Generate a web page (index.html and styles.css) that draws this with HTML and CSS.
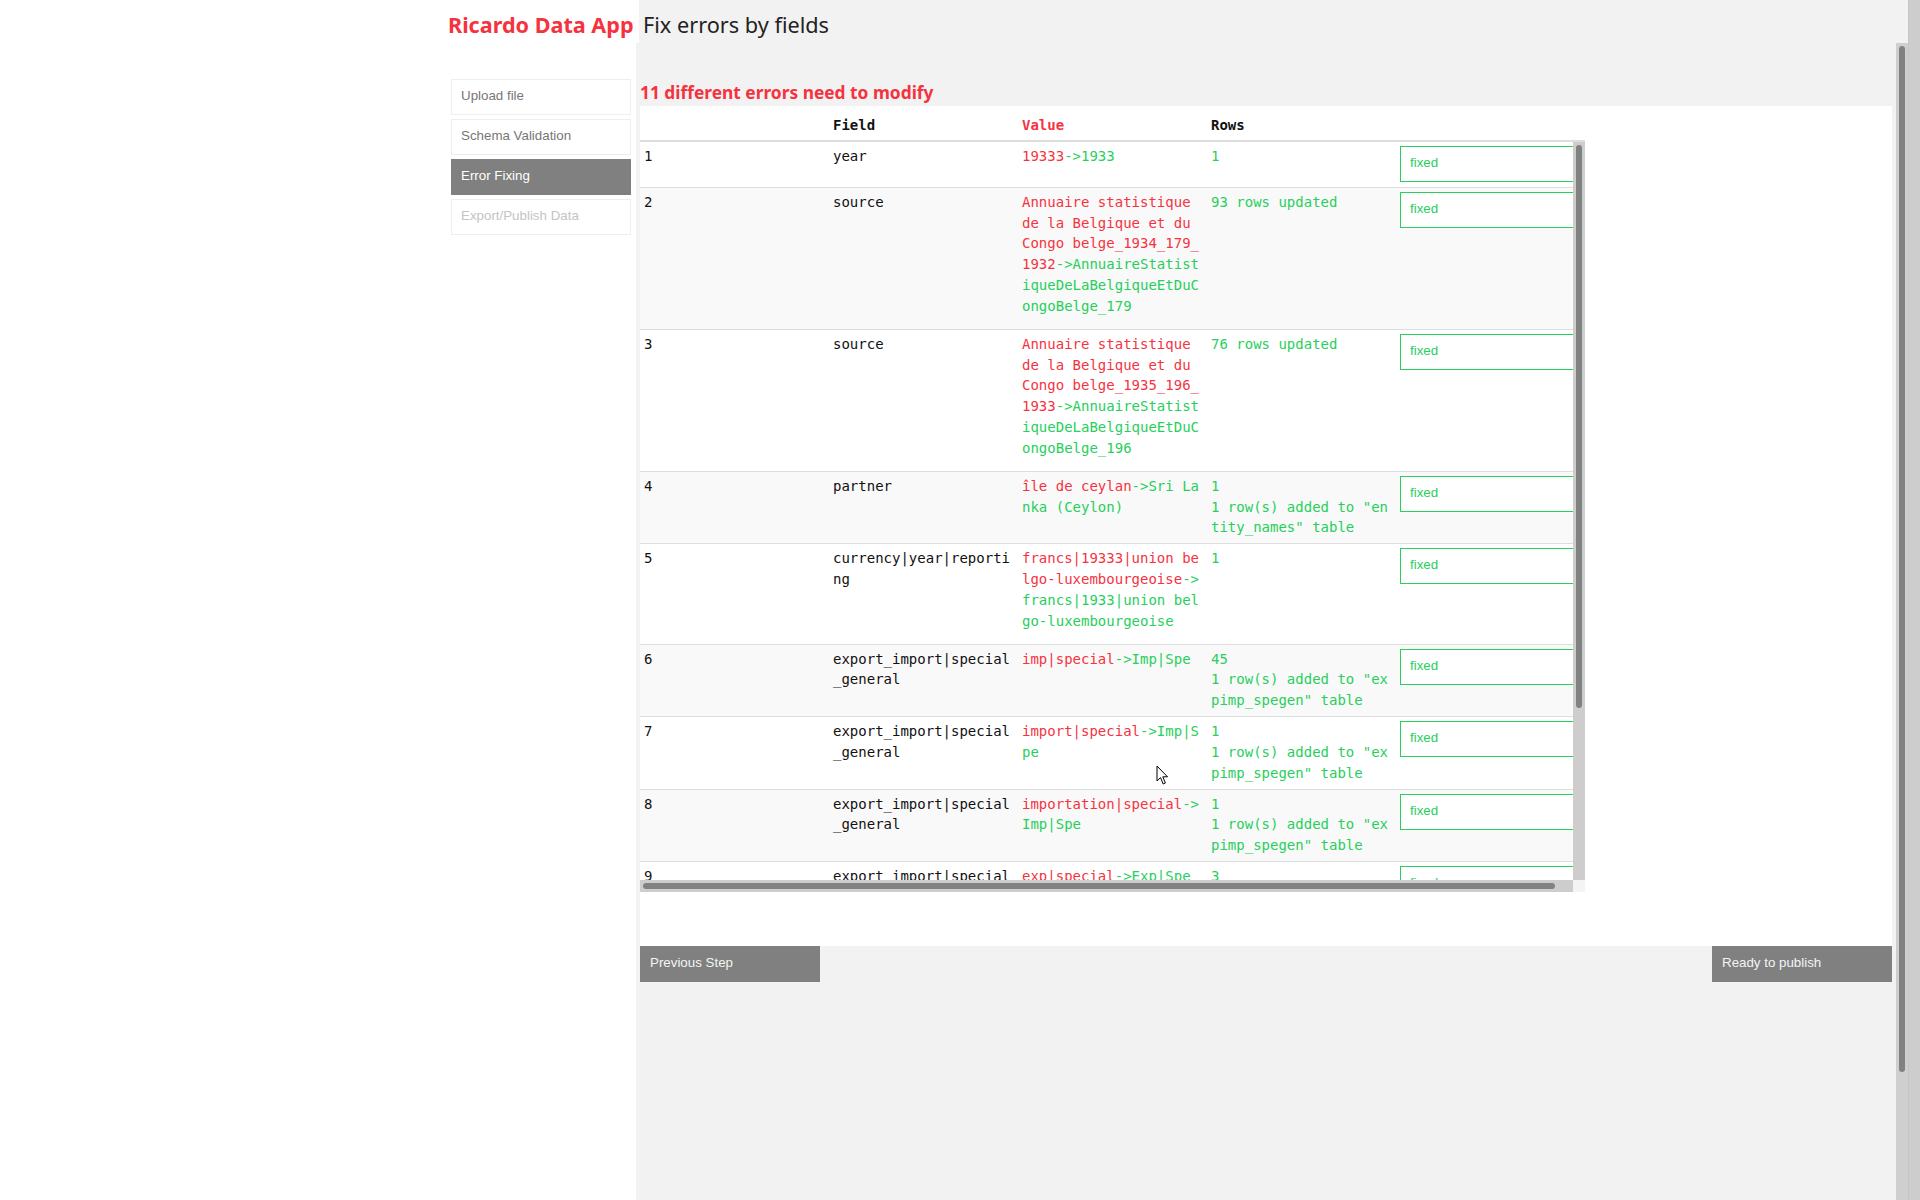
FILE: index.html
```html
<!DOCTYPE html>
<html lang="en">
<head>
<meta charset="utf-8">
<title>Ricardo Data App - Fix errors by fields</title>
<link rel="stylesheet" href="styles.css">
</head>
<body>
<div class="app">
  <div class="page">
    <header class="topbar">
      <div class="brand">Ricardo Data App</div>
      <h1 class="page-title">Fix errors by fields</h1>
    </header>
    <div class="body-row">
      <aside class="sidebar">
        <div class="step">Upload file</div>
        <div class="step">Schema Validation</div>
        <div class="step active">Error Fixing</div>
        <div class="step disabled">Export/Publish Data</div>
      </aside>
      <div class="main-scroll">
        <main class="content">
          <h2 class="errors-title">11 different errors need to modify</h2>
          <section class="panel">
            <table class="grid head-table">
              <thead>
                <tr><th></th><th>Field</th><th class="red">Value</th><th>Rows</th><th></th></tr>
              </thead>
            </table>
            <div class="tablebox">
              <div class="tb-main">
                <div class="viewport">
                  <table class="grid body-table">
                    <tbody>
                      <tr>
                        <td>1</td><td>year</td>
                        <td><div class="val"><span class="red">19333</span><span class="green">-&gt;1933</span></div></td>
                        <td class="green"><div>1</div></td>
                        <td><input class="fix" value="fixed" readonly></td>
                      </tr>
                      <tr>
                        <td>2</td><td>source</td>
                        <td><div class="val"><span class="red">Annuaire statistique de la Belgique et du Congo belge_1934_179_1932</span><span class="green">-&gt;AnnuaireStatistiqueDeLaBelgiqueEtDuCongoBelge_179</span></div></td>
                        <td class="green"><div>93 rows updated</div></td>
                        <td><input class="fix" value="fixed" readonly></td>
                      </tr>
                      <tr>
                        <td>3</td><td>source</td>
                        <td><div class="val"><span class="red">Annuaire statistique de la Belgique et du Congo belge_1935_196_1933</span><span class="green">-&gt;AnnuaireStatistiqueDeLaBelgiqueEtDuCongoBelge_196</span></div></td>
                        <td class="green"><div>76 rows updated</div></td>
                        <td><input class="fix" value="fixed" readonly></td>
                      </tr>
                      <tr>
                        <td>4</td><td>partner</td>
                        <td><div class="val"><span class="red">île de ceylan</span><span class="green">-&gt;Sri Lanka (Ceylon)</span></div></td>
                        <td class="green"><div>1</div><div>1 row(s) added to "entity_names" table</div></td>
                        <td><input class="fix" value="fixed" readonly></td>
                      </tr>
                      <tr>
                        <td>5</td><td>currency|year|reporting</td>
                        <td><div class="val"><span class="red">francs|19333|union belgo-luxembourgeoise</span><span class="green">-&gt;francs|1933|union belgo-luxembourgeoise</span></div></td>
                        <td class="green"><div>1</div></td>
                        <td><input class="fix" value="fixed" readonly></td>
                      </tr>
                      <tr>
                        <td>6</td><td>export_import|special_general</td>
                        <td><div class="val"><span class="red">imp|special</span><span class="green">-&gt;Imp|Spe</span></div></td>
                        <td class="green"><div>45</div><div>1 row(s) added to "expimp_spegen" table</div></td>
                        <td><input class="fix" value="fixed" readonly></td>
                      </tr>
                      <tr>
                        <td>7</td><td>export_import|special_general</td>
                        <td><div class="val"><span class="red">import|special</span><span class="green">-&gt;Imp|Spe</span></div></td>
                        <td class="green"><div>1</div><div>1 row(s) added to "expimp_spegen" table</div></td>
                        <td><input class="fix" value="fixed" readonly></td>
                      </tr>
                      <tr>
                        <td>8</td><td>export_import|special_general</td>
                        <td><div class="val"><span class="red">importation|special</span><span class="green">-&gt;Imp|Spe</span></div></td>
                        <td class="green"><div>1</div><div>1 row(s) added to "expimp_spegen" table</div></td>
                        <td><input class="fix" value="fixed" readonly></td>
                      </tr>
                      <tr>
                        <td>9</td><td>export_import|special_general</td>
                        <td><div class="val"><span class="red">exp|special</span><span class="green">-&gt;Exp|Spe</span></div></td>
                        <td class="green"><div>3</div><div>1 row(s) added to "expimp_spegen" table</div></td>
                        <td><input class="fix" value="fixed" readonly></td>
                      </tr>
                      <tr>
                        <td>10</td><td>export_import|special_general</td>
                        <td><div class="val"><span class="red">export|special</span><span class="green">-&gt;Exp|Spe</span></div></td>
                        <td class="green"><div>2</div><div>1 row(s) added to "expimp_spegen" table</div></td>
                        <td><input class="fix" value="fixed" readonly></td>
                      </tr>
                      <tr>
                        <td>11</td><td>export_import|special_general</td>
                        <td><div class="val"><span class="red">exportation|special</span><span class="green">-&gt;Exp|Spe</span></div></td>
                        <td class="green"><div>1</div><div>1 row(s) added to "expimp_spegen" table</div></td>
                        <td><input class="fix" value="fixed" readonly></td>
                      </tr>
                    </tbody>
                  </table>
                </div>
                <div class="vtrack"><div class="vthumb"></div></div>
              </div>
              <div class="tb-hbar">
                <div class="htrack"><div class="hthumb"></div></div>
                <div class="corner"></div>
              </div>
            </div>
          </section>
          <div class="actions">
            <button class="btn">Previous Step</button>
            <button class="btn">Ready to publish</button>
          </div>
        </main>
        <div class="page-vtrack"><div class="page-vthumb"></div></div>
      </div>
    </div>
  </div>
  <div class="outer-track"></div>
  <svg class="cursor" width="14" height="21" viewBox="0 0 14 21" aria-hidden="true">
    <path d="M1 1 L1 16 L4.5 12.6 L7.2 19 L9.4 18 L6.8 11.8 L11.5 11.8 Z" fill="#fff" stroke="#000" stroke-width="1" stroke-linejoin="round"/>
  </svg>
</div>
</body>
</html>
```

FILE: styles.css
```css
html, body {
  margin: 0;
  padding: 0;
}
body {
  overflow: hidden;
  font-family: "Liberation Sans", Arial, sans-serif;
  background: #ffffff;
}
.app {
  position: relative;
  display: flex;
  width: 1920px;
  height: 1200px;
}
.page {
  flex: 1;
  min-width: 0;
  display: flex;
  flex-direction: column;
}
.topbar {
  display: flex;
  height: 43px;
  flex-shrink: 0;
  background: #f2f2f2;
}
.brand {
  width: 639px;
  box-sizing: border-box;
  padding: 11px 0 0 448px;
  background: #ffffff;
  color: #f5333f;
  font-family: "Noto Sans", "Open Sans", sans-serif;
  font-weight: 700;
  font-size: 21.6px;
  line-height: 27px;
  white-space: nowrap;
}
.page-title {
  margin: 0;
  padding: 11px 0 0 4px;
  color: #222222;
  font-family: "Noto Sans", "Open Sans", sans-serif;
  font-weight: 400;
  font-size: 21.7px;
  line-height: 27px;
  white-space: nowrap;
}
.body-row {
  flex: 1;
  display: flex;
  min-height: 0;
}
.sidebar {
  width: 636px;
  flex-shrink: 0;
  box-sizing: border-box;
  padding: 36px 0 0 451px;
  background: #ffffff;
  display: flex;
  flex-direction: column;
  gap: 4px;
}
.step {
  width: 180px;
  height: 36px;
  box-sizing: border-box;
  border: 1px solid #eeeeee;
  padding: 0 0 3px 9px;
  display: flex;
  align-items: center;
  font-size: 13.33px;
  color: #777777;
  background: #ffffff;
}
.step.active {
  background: #808080;
  border-color: #808080;
  color: #ffffff;
}
.step.disabled {
  color: #c4c4c4;
}
.main-scroll {
  flex: 1;
  display: flex;
  background: #f2f2f2;
  min-width: 0;
}
.content {
  flex: 1;
  min-width: 0;
  padding: 37px 4px 0 4px;
}
.errors-title {
  margin: 0 0 2px 0;
  color: #f5333f;
  font-family: "Noto Sans", "Open Sans", sans-serif;
  font-weight: 700;
  font-size: 17.35px;
  line-height: 24px;
}
.panel {
  height: 840px;
  box-sizing: border-box;
  padding-top: 4px;
  background: #ffffff;
}
.grid {
  width: 945px;
  table-layout: fixed;
  border-collapse: collapse;
  font-family: "DejaVu Sans Mono", "Liberation Mono", monospace;
  font-size: 14px;
  line-height: 20.83px;
  color: #111111;
}
.grid th {
  text-align: left;
  font-weight: 700;
  padding: 5px 4px 4px 4px;
  border-bottom: 2px solid #dddddd;
  color: #111111;
}
.grid th.red {
  color: #f5333f;
}
.grid td {
  padding: 4px 4px 5px 4px;
  vertical-align: top;
  border-bottom: 1px solid #dddddd;
  word-break: break-all;
}
.body-table tr:nth-child(even) td {
  background: #f9f9f9;
}
.red {
  color: #f5333f;
}
.green {
  color: #27cf5c;
}
.val {
  padding-bottom: 7px;
}
.fix {
  display: block;
  width: 100%;
  height: 36px;
  margin: 0;
  box-sizing: border-box;
  border: 1px solid #27cf5c;
  padding: 0 9px 3px 9px;
  background: #ffffff;
  color: #27cf5c;
  font-family: "Liberation Sans", Arial, sans-serif;
  font-size: 13.33px;
  outline: none;
}
.tablebox {
  width: 945px;
  display: flex;
  flex-direction: column;
}
.tb-main {
  display: flex;
  height: 738px;
}
.viewport {
  width: 933px;
  height: 738px;
  overflow: hidden;
}
.vtrack {
  width: 12px;
  box-sizing: border-box;
  padding: 3px 3px 0 3px;
  background: #cdcdcd;
}
.vthumb {
  height: 563px;
  border-radius: 3px;
  background: #7f8281;
}
.tb-hbar {
  display: flex;
  height: 12px;
}
.htrack {
  width: 933px;
  box-sizing: border-box;
  padding: 3px;
  background: #cdcdcd;
}
.hthumb {
  width: 912px;
  height: 6px;
  border-radius: 3px;
  background: #7f8281;
}
.corner {
  width: 12px;
  background: #f4f4f4;
}
.actions {
  display: flex;
  justify-content: space-between;
}
.btn {
  width: 180px;
  height: 36px;
  box-sizing: border-box;
  border: 0;
  padding: 0 0 3px 10px;
  margin: 0;
  background: #808080;
  color: #f4f4f4;
  font-family: "Liberation Sans", Arial, sans-serif;
  font-size: 13.33px;
  text-align: left;
}
.page-vtrack {
  width: 12px;
  flex-shrink: 0;
  box-sizing: border-box;
  padding: 3px 3px 0 3px;
  background: #cfcfcf;
}
.page-vthumb {
  height: 1026px;
  border-radius: 3px;
  background: #7f8281;
}
.outer-track {
  width: 12px;
  flex-shrink: 0;
  box-sizing: border-box;
  border-left: 1px solid #c6c6c6;
  background: #cdcdcd;
}
.cursor {
  position: absolute;
  left: 1156px;
  top: 765px;
}
```
